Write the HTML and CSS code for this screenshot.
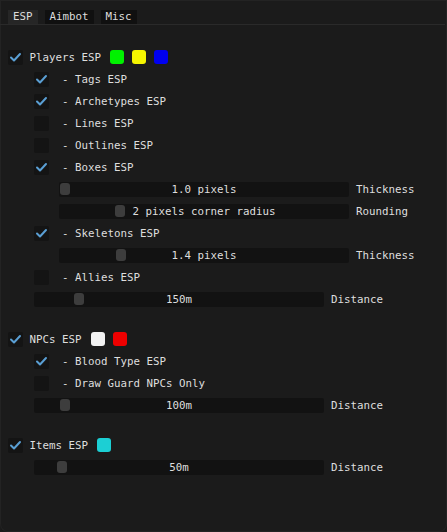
FILE: index.html
```html
<!DOCTYPE html>
<html>
<head>
<meta charset="utf-8">
<link rel="stylesheet" href="styles.css">
</head>
<body>
<div class="window">
  <div class="tabbar">
    <span class="tab active">ESP</span>
    <span class="tab">Aimbot</span>
    <span class="tab">Misc</span>
  </div>
  <div class="content">
    <section class="group">
      <div class="row">
        <span class="check on"><svg viewBox="0 0 15 15"><path d="M3 7.5 L6 10.5 L12 4"/></svg></span>
        <span class="label">Players ESP</span>
        <span class="swatches"><span class="swatch green"></span><span class="swatch yellow"></span><span class="swatch blue"></span></span>
      </div>
      <div class="row sub">
        <span class="check on"><svg viewBox="0 0 15 15"><path d="M3 7.5 L6 10.5 L12 4"/></svg></span>
        <span class="label"> - Tags ESP</span>
      </div>
      <div class="row sub">
        <span class="check on"><svg viewBox="0 0 15 15"><path d="M3 7.5 L6 10.5 L12 4"/></svg></span>
        <span class="label"> - Archetypes ESP</span>
      </div>
      <div class="row sub">
        <span class="check"></span>
        <span class="label"> - Lines ESP</span>
      </div>
      <div class="row sub">
        <span class="check"></span>
        <span class="label"> - Outlines ESP</span>
      </div>
      <div class="row sub">
        <span class="check on"><svg viewBox="0 0 15 15"><path d="M3 7.5 L6 10.5 L12 4"/></svg></span>
        <span class="label"> - Boxes ESP</span>
      </div>
      <div class="row subslider">
        <div class="slider"><span class="knob" style="left:1px"></span><span class="value">1.0 pixels</span></div>
        <span class="slabel">Thickness</span>
      </div>
      <div class="row subslider">
        <div class="slider"><span class="knob" style="left:56px"></span><span class="value">2 pixels corner radius</span></div>
        <span class="slabel">Rounding</span>
      </div>
      <div class="row sub">
        <span class="check on"><svg viewBox="0 0 15 15"><path d="M3 7.5 L6 10.5 L12 4"/></svg></span>
        <span class="label"> - Skeletons ESP</span>
      </div>
      <div class="row subslider">
        <div class="slider"><span class="knob" style="left:57px"></span><span class="value">1.4 pixels</span></div>
        <span class="slabel">Thickness</span>
      </div>
      <div class="row sub">
        <span class="check"></span>
        <span class="label"> - Allies ESP</span>
      </div>
      <div class="row topslider">
        <div class="slider"><span class="knob" style="left:40px"></span><span class="value">150m</span></div>
        <span class="slabel">Distance</span>
      </div>
    </section>

    <section class="group">
      <div class="row">
        <span class="check on"><svg viewBox="0 0 15 15"><path d="M3 7.5 L6 10.5 L12 4"/></svg></span>
        <span class="label">NPCs ESP</span>
        <span class="swatches"><span class="swatch white"></span><span class="swatch red"></span></span>
      </div>
      <div class="row sub">
        <span class="check on"><svg viewBox="0 0 15 15"><path d="M3 7.5 L6 10.5 L12 4"/></svg></span>
        <span class="label"> - Blood Type ESP</span>
      </div>
      <div class="row sub">
        <span class="check"></span>
        <span class="label"> - Draw Guard NPCs Only</span>
      </div>
      <div class="row topslider">
        <div class="slider"><span class="knob" style="left:26px"></span><span class="value">100m</span></div>
        <span class="slabel">Distance</span>
      </div>
    </section>

    <section class="group">
      <div class="row">
        <span class="check on"><svg viewBox="0 0 15 15"><path d="M3 7.5 L6 10.5 L12 4"/></svg></span>
        <span class="label">Items ESP</span>
        <span class="swatches"><span class="swatch cyan"></span></span>
      </div>
      <div class="row topslider">
        <div class="slider"><span class="knob" style="left:23px"></span><span class="value">50m</span></div>
        <span class="slabel">Distance</span>
      </div>
    </section>
  </div>
</div>
</body>
</html>
```

FILE: styles.css
```css
html, body {
  margin: 0;
  padding: 0;
  background: #1b1b1b;
}
body {
  font-family: "DejaVu Sans Mono", "Liberation Mono", monospace;
  font-size: 10.8px;
  color: #dedede;
}
.window {
  width: 447px;
  height: 532px;
  box-sizing: border-box;
  background: #1b1b1b;
  border-radius: 0 0 8px 8px;
  box-shadow: inset 0 0 0 1px #232323;
  overflow: hidden;
}
.tabbar {
  display: flex;
  gap: 7px;
  padding: 10px 0 0 8px;
  margin-right: 2px;
  border-bottom: 1px solid #2a2a2a;
  height: 14px;
}
.tab {
  display: block;
  height: 14px;
  line-height: 14px;
  padding: 0 5px;
  background: #101010;
  color: #dcdcdc;
}
.tab.active {
  background: #262626;
}
.content {
  padding: 21px 0 0 8px;
}
.group {
  margin-bottom: 18px;
}
.row {
  height: 22px;
  display: flex;
  align-items: center;
}
.row.sub {
  padding-left: 26px;
}
.row.subslider {
  padding-left: 51px;
}
.row.topslider {
  padding-left: 26px;
}
.check {
  width: 15px;
  height: 15px;
  background: #141414;
  border-radius: 2px;
  flex: none;
  display: block;
}
.check svg {
  display: block;
  width: 15px;
  height: 15px;
}
.check svg path {
  fill: none;
  stroke: #5a9fd4;
  stroke-width: 2;
  stroke-linecap: round;
  stroke-linejoin: round;
}
.label {
  margin-left: 6.5px;
  white-space: pre;
  line-height: 15px;
}
.swatches {
  display: flex;
  gap: 8px;
  margin-left: 9px;
}
.swatch {
  width: 14px;
  height: 14px;
  border-radius: 3px;
  display: block;
}
.green { background: #00f200; }
.yellow { background: #f5f500; }
.blue { background: #0000f0; }
.white { background: #f2f2f2; }
.red { background: #ee0000; }
.cyan { background: #1ccfd4; }
.slider {
  position: relative;
  width: 290px;
  height: 15px;
  background: #121212;
  border-radius: 2px;
  display: flex;
  align-items: center;
  justify-content: center;
  flex: none;
}
.knob {
  position: absolute;
  top: 1.5px;
  width: 10px;
  height: 12px;
  border-radius: 3px;
  background: #3d3d3d;
}
.value {
  position: relative;
  white-space: pre;
  line-height: 15px;
}
.slabel {
  margin-left: 7px;
  line-height: 15px;
}
```
